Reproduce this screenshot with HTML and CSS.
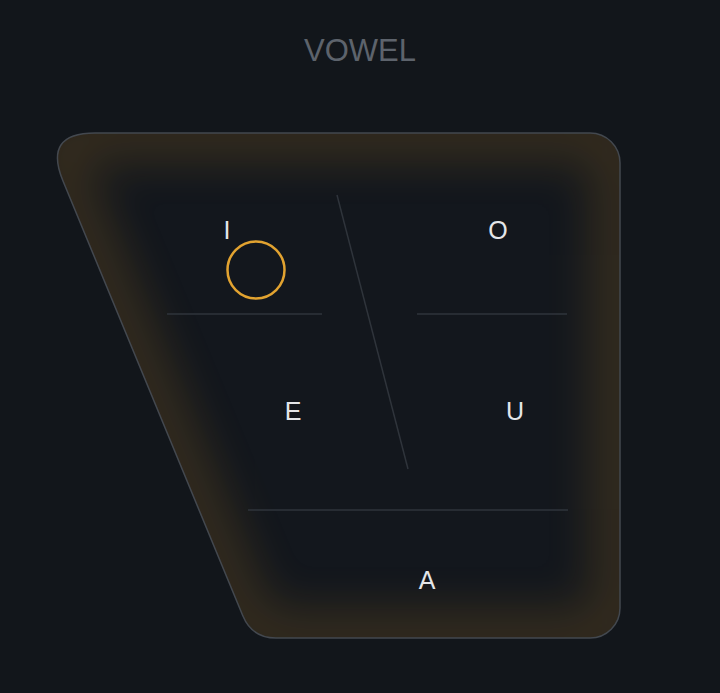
FILE: index.html
```html
<!DOCTYPE html>
<html lang="en">
<head>
  <meta charset="UTF-8">
  <meta name="viewport" content="width=device-width, initial-scale=1.0">
  <title>Vowel</title>
  <link rel="stylesheet" href="styles.css">
</head>
<body>
  <div class="vowel-chart">
    <h1 class="chart-title">VOWEL</h1>

    <!-- Vowel trapezoid: front/back split by the diagonal, height rows by the rules -->
    <svg class="trapezoid" width="720" height="603" viewBox="0 90 720 603">
      <defs>
        <path id="panel-shape" d="M 95 133 L 590 133 A 30 30 0 0 1 620 163 L 620 608 A 30 30 0 0 1 590 638 L 276 638 Q 252 638 242.8 615.8 L 63 181 Q 43 133 95 133 Z"/>
        <clipPath id="panel-clip">
          <use href="#panel-shape"/>
        </clipPath>
        <filter id="soft-glow" x="-20%" y="-20%" width="140%" height="140%">
          <feGaussianBlur stdDeviation="22"/>
        </filter>
      </defs>

      <use href="#panel-shape" class="panel-fill"/>
      <g clip-path="url(#panel-clip)">
        <use href="#panel-shape" class="panel-glow" filter="url(#soft-glow)"/>
      </g>
      <use href="#panel-shape" class="panel-edge"/>

      <!-- dividers -->
      <line class="divider" x1="167" y1="314" x2="322" y2="314"/>
      <line class="divider" x1="417" y1="314" x2="567" y2="314"/>
      <line class="divider" x1="248" y1="510" x2="568" y2="510"/>
      <line class="divider" x1="337" y1="195" x2="408" y2="469"/>

      <!-- vowels -->
      <text class="vowel" x="227" y="239">I</text>
      <text class="vowel" x="498" y="239">O</text>
      <text class="vowel" x="293" y="420">E</text>
      <text class="vowel" x="515" y="420">U</text>
      <text class="vowel" x="427" y="589">A</text>

      <!-- tongue position marker -->
      <circle class="marker" cx="256" cy="270" r="28.5"/>
    </svg>
  </div>
</body>
</html>
```

FILE: styles.css
```css
body {
  margin: 0;
  background-color: #12161b;
  font-family: "Liberation Sans", Arial, sans-serif;
  overflow: hidden;
}
.vowel-chart {
  display: flex;
  flex-direction: column;
  align-items: center;
  padding-top: 36px;
}
.chart-title {
  margin: 0 0 24px;
  font-size: 31px;
  line-height: 30px;
  font-weight: 400;
  color: #5d636c;
}
.trapezoid {
  display: block;
}
.panel-fill {
  fill: #13171d;
}
.panel-glow {
  fill: none;
  stroke: #cf8f26;
  stroke-width: 60;
  opacity: 0.17;
}
.panel-edge {
  fill: none;
  stroke: #43484f;
  stroke-width: 1.5;
}
.divider {
  stroke: #2f343b;
  stroke-width: 1.5;
}
.vowel {
  fill: #e4e6e9;
  font-size: 25px;
  text-anchor: middle;
}
.marker {
  fill: none;
  stroke: #e2a330;
  stroke-width: 2.5;
}
```
